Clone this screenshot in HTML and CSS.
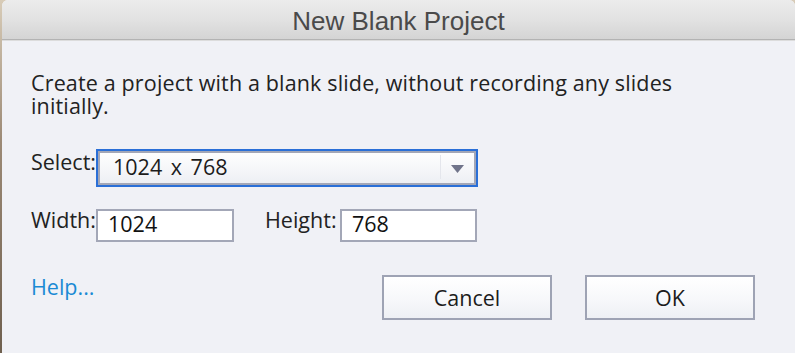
FILE: index.html
```html
<!DOCTYPE html>
<html>
<head>
<meta charset="utf-8">
<link rel="stylesheet" href="styles.css">
</head>
<body>
<div class="window">
  <div class="titlebar">New Blank Project</div>
  <div class="content">
    <p class="desc">Create a project with a blank slide, without recording any slides initially.</p>
    <div class="row select-row">
      <span class="lbl">Select:</span>
      <div class="select">
        <span class="value">1024 x 768</span>
        <span class="sep"></span>
        <svg class="arrow" width="13" height="8" viewBox="0 0 13 8"><path d="M0 0 H13 L6.5 8 Z" fill="#70748a"/></svg>
      </div>
    </div>
    <div class="row size-row">
      <span class="lbl">Width:</span>
      <div class="input input-w">1024</div>
      <span class="lbl lbl-h">Height:</span>
      <div class="input input-h">768</div>
    </div>
    <div class="footer">
      <a class="help">Help...</a>
      <div class="buttons">
        <button class="btn">Cancel</button>
        <button class="btn">OK</button>
      </div>
    </div>
  </div>
</div>
</body>
</html>
```

FILE: styles.css
```css
html, body {
  margin: 0;
  padding: 0;
  height: 100%;
}
body {
  background: linear-gradient(180deg, #d8ccb8 0%, #9c8a76 40%, #6f604f 100%);
  overflow: hidden;
  font-family: "Open Sans", "DejaVu Sans", sans-serif;
  color: #222;
}
.window {
  margin-left: 2px;
  height: 100%;
  background: #f0f1f6;
  border-radius: 6px 6px 0 0;
  overflow: hidden;
}
.titlebar {
  height: 40px;
  box-sizing: border-box;
  background: linear-gradient(180deg, #ececec 0%, #e2e2e2 50%, #d4d4d4 100%);
  border-bottom: 1px solid #b3b3b3;
  text-align: center;
  font-family: "Liberation Sans", Arial, sans-serif;
  font-size: 26px;
  line-height: 40px;
  padding-top: 1px;
  color: #4a4a4a;
  box-shadow: 0 1px 0 #dcdcdc;
}
.content {
  padding: 31px 40px 0 29px;
}
.desc {
  margin: 0;
  max-width: 690px;
  font-size: 21.5px;
  letter-spacing: 0.15px;
  line-height: 23px;
}
.row {
  display: flex;
  align-items: flex-start;
}
.select-row {
  margin-top: 32px;
}
.lbl {
  width: 65px;
  flex: none;
  font-size: 21.5px;
  line-height: 22px;
}
.select-row .lbl {
  margin-top: 2px;
}
.select {
  width: 382px;
  height: 38px;
  box-sizing: border-box;
  border: 2px solid #2a6fd7;
  box-shadow: inset 0 0 0 2px #a3a7b7;
  background: linear-gradient(180deg, #ffffff 0%, #f4f5f8 60%, #eceef3 100%);
  display: flex;
  align-items: flex-start;
  padding: 0 12px 0 15px;
}
.value {
  flex: 1;
  font-size: 21.5px;
  word-spacing: 3px;
  line-height: 22px;
  margin-top: 5px;
  color: #1c1c1c;
}
.sep {
  width: 1px;
  height: 24px;
  margin-top: 4px;
  background: #e4e6ec;
  margin-right: 10px;
}
.arrow {
  display: block;
  margin-top: 14px;
}
.size-row {
  margin-top: 22px;
}
.size-row .lbl {
  margin-top: 0;
}
.input {
  height: 33px;
  box-sizing: border-box;
  border: 2px solid #a3a7b7;
  background: #fff;
  font-size: 21.5px;
  line-height: 22px;
  padding: 2px 0 0 10px;
  color: #111;
}
.input-w {
  width: 138px;
}
.lbl.lbl-h {
  width: 75px;
  margin-left: 31px;
}
.input-h {
  width: 137px;
}
.footer {
  margin-top: 33px;
  display: flex;
  justify-content: space-between;
  align-items: flex-start;
}
.help {
  color: #1a8ad4;
  font-size: 21.5px;
  line-height: 22px;
  margin-top: 1px;
  cursor: pointer;
}
.buttons {
  display: flex;
  gap: 33px;
}
.btn {
  width: 170px;
  height: 45px;
  box-sizing: border-box;
  border: 2px solid #9ea3b4;
  border-radius: 0;
  background: linear-gradient(180deg, #ffffff 0%, #f6f7fa 60%, #eef0f4 100%);
  font-family: "Open Sans", "DejaVu Sans", sans-serif;
  font-size: 21.5px;
  color: #1c1c1c;
  padding: 0;
}
```
